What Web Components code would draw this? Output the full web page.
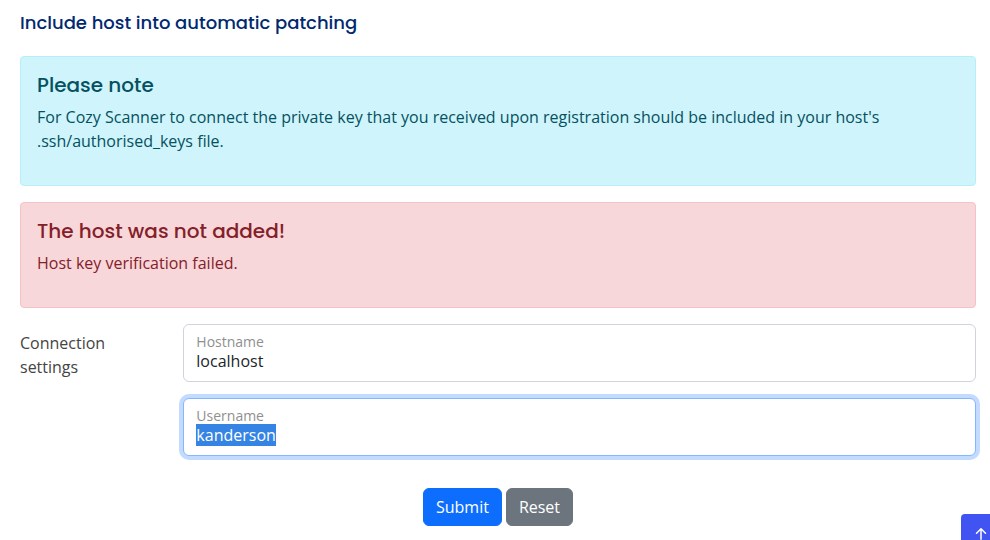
<!DOCTYPE html>
<html lang="en">
<head>
<meta charset="utf-8">
<title>Include host into automatic patching</title>
<style>
  html { overflow: hidden auto; }
  body { margin: 0; background: #fff; color: #444; font: 16px/24px "Open Sans", sans-serif; }
</style>
</head>
<body>
<host-page></host-page>
<script>
const heading = 'font-family: Poppins, Inter, sans-serif; font-weight: 500;';

class BaseElement extends HTMLElement {
  constructor() {
    super();
    this.attachShadow({ mode: 'open' }).innerHTML =
      '<style>*, *::before { box-sizing: border-box; }</style>' + this.render();
  }
}

customElements.define('alert-box', class extends BaseElement {
  render() {
    return `<style>
      :host { display: block; box-sizing: border-box; padding: 16px; border: 1px solid #b6effb; border-radius: 4px; background: #cff4fc; color: #055160; }
      :host([kind="danger"]) { border-color: #f5c2c7; background: #f8d7da; color: #842029; }
      h4 { margin: 0 0 8px; font-size: 20px; line-height: 24px; ${heading} }
      p { margin: 0 0 16px; }
    </style>
    <h4><slot name="title"></slot></h4><p><slot></slot></p>`;
  }
});

customElements.define('text-field', class extends BaseElement {
  render() {
    return `<style>
      :host { display: block; }
      .box { padding: 9px 12px; border: 1px solid #ced4da; border-radius: 6px; background: #fff; }
      .box:focus-within { border-color: #86b7fe; box-shadow: 0 0 0 4px #c2dbfe; }
      label { display: block; font-size: 14px; line-height: 16px; color: #8f8f8f; }
      input { display: block; width: 100%; height: 22px; margin: 0; padding: 0; border: 0; outline: 0; background: none; color: #212529; font: inherit; line-height: 22px; }
      input::selection { background: #3584e4; color: #fff; }
    </style>
    <div class="box"><label for="field"></label><input id="field" type="text" autocomplete="off" spellcheck="false"></div>`;
  }
  connectedCallback() {
    this.shadowRoot.querySelector('label').textContent = this.getAttribute('label');
    this.shadowRoot.querySelector('input').value = this.getAttribute('value');
  }
  select() {
    const input = this.shadowRoot.querySelector('input');
    input.focus();
    input.select();
  }
});

customElements.define('action-button', class extends BaseElement {
  render() {
    return `<style>
      :host { display: block; }
      button { display: block; margin: 0; padding: 6px 12px; border: 1px solid #0d6efd; border-radius: 6px; background: #0d6efd; color: #fff; font: inherit; cursor: pointer; }
      :host([kind="secondary"]) button { border-color: #6c757d; background: #6c757d; }
    </style>
    <button type="button"><slot></slot></button>`;
  }
});

customElements.define('back-to-top', class extends BaseElement {
  render() {
    return `<style>
      :host { position: fixed; right: -11px; bottom: -14px; }
      a { display: flex; align-items: center; justify-content: center; width: 40px; height: 40px; border-radius: 4px; background: #4154f1; color: #fff; }
    </style>
    <a href="#" aria-label="Back to top"><svg width="24" height="24" viewBox="0 0 16 16" fill="currentColor" aria-hidden="true"><path fill-rule="evenodd" d="M8 12a.5.5 0 0 0 .5-.5V5.707l2.146 2.147a.5.5 0 0 0 .708-.708l-3-3a.5.5 0 0 0-.708 0l-3 3a.5.5 0 1 0 .708.708L7.5 5.707V11.5a.5.5 0 0 0 .5.5z"/></svg></a>`;
  }
});

customElements.define('host-page', class extends BaseElement {
  render() {
    return `<style>
      :host { display: block; padding: 12px 14px 14px 20px; }
      h5 { margin: 0 0 22px; font-size: 18px; line-height: 22px; color: #012970; ${heading} }
      .stack { display: grid; gap: 16px; }
      form { display: grid; grid-template-columns: repeat(12, 1fr); gap: 16px 24px; }
      .legend { grid-column: span 2; padding-top: 7px; }
      .fields { grid-column: span 10; display: grid; gap: 16px; }
      .actions { grid-column: 1 / -1; display: flex; justify-content: center; gap: 4px; padding-top: 16px; }
    </style>
    <h5>Include host into automatic patching</h5>
    <div class="stack">
      <alert-box><span slot="title">Please note</span>For Cozy Scanner to connect the private key that you received upon registration should be included in your host's .ssh/authorised_keys file.</alert-box>
      <alert-box kind="danger"><span slot="title">The host was not added!</span>Host key verification failed.</alert-box>
      <form>
        <div class="legend" id="legend">Connection settings</div>
        <div class="fields" role="group" aria-labelledby="legend">
          <text-field label="Hostname" value="localhost"></text-field>
          <text-field id="username" label="Username" value="kanderson"></text-field>
        </div>
        <div class="actions"><action-button>Submit</action-button><action-button kind="secondary">Reset</action-button></div>
      </form>
    </div>
    <back-to-top></back-to-top>`;
  }
  connectedCallback() { this.shadowRoot.getElementById('username').select(); }
});
</script>
</body>
</html>
